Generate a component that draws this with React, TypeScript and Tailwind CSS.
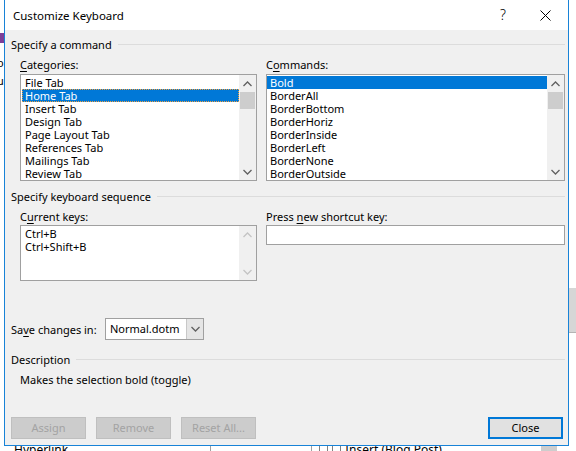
import React from "react";

const CATEGORIES = [
  "File Tab",
  "Home Tab",
  "Insert Tab",
  "Design Tab",
  "Page Layout Tab",
  "References Tab",
  "Mailings Tab",
  "Review Tab",
];

const COMMANDS = [
  "Bold",
  "BorderAll",
  "BorderBottom",
  "BorderHoriz",
  "BorderInside",
  "BorderLeft",
  "BorderNone",
  "BorderOutside",
];

function Chevron({ up, color }: { up?: boolean; color: string }) {
  return (
    <svg width="9" height="6" viewBox="0 0 9 6">
      <path
        d={up ? "M0.5 5 L4.5 1 L8.5 5" : "M0.5 1 L4.5 5 L8.5 1"}
        fill="none"
        stroke={color}
        strokeWidth="1.3"
      />
    </svg>
  );
}

function ScrollBar({ disabled }: { disabled?: boolean }) {
  const c = disabled ? "#c4c4c4" : "#606060";
  return (
    <div className="flex w-[17px] shrink-0 flex-col bg-[#f0f0f0]">
      <div className="flex h-[17px] items-center justify-center">
        <Chevron up color={c} />
      </div>
      {!disabled && <div className="mx-px h-[17px] bg-[#cdcdcd]" />}
      <div className="flex-1" />
      <div className="flex h-[17px] items-center justify-center">
        <Chevron color={c} />
      </div>
    </div>
  );
}

function GroupHeader({ children }: { children: React.ReactNode }) {
  return (
    <div className="flex h-[13px] items-center gap-[6px]">
      <span className="leading-[13px]">{children}</span>
      <div className="h-px flex-1 bg-[#dcdcdc]" />
    </div>
  );
}

function Key({ children }: { children: React.ReactNode }) {
  return <span className="underline underline-offset-[2px]">{children}</span>;
}

function Button({
  label,
  primary,
  disabled,
}: {
  label: string;
  primary?: boolean;
  disabled?: boolean;
}) {
  return (
    <div
      className={
        primary
          ? "flex h-[22px] w-[75px] items-center justify-center border-2 border-[#0078d7] bg-[#e1e1e1] text-black"
          : "flex h-[22px] w-[75px] items-center justify-center border border-[#bfbfbf] bg-[#cccccc] text-[#a3a3a3]"
      }
    >
      {label}
    </div>
  );
}

export default function App() {
  return (
    <div className="relative h-[451px] w-[576px] overflow-hidden bg-white font-['Noto_Sans',sans-serif] text-[11px] text-black">
      {/* window behind the dialog */}
      <div className="absolute left-0 top-[33px] h-[10px] w-[4px] bg-[#7e3f98]" />
      <div className="absolute left-[-3px] top-[56px] leading-[13px]">o</div>
      <div className="absolute left-[-3px] top-[74px] leading-[13px]">u</div>
      <div className="absolute right-0 top-[288px] h-[44px] w-[7px] bg-[#d6d6d6]" />
      <div className="absolute right-0 top-[332px] h-px w-[7px] bg-[#b4b4b4]" />
      <div className="absolute left-[14px] top-[443px] text-[12px] leading-[13px]">Hyperlink...</div>
      <div className="absolute left-[210px] top-[440px] h-[12px] w-px bg-[#a0a0a0]" />
      <div className="absolute left-[311px] top-[440px] h-[12px] w-px bg-[#a0a0a0]" />
      <div className="absolute left-[319px] top-[444px] h-[9px] w-[9px] border border-[#808080] bg-white" />
      <div className="absolute left-[332px] top-[444px] h-[9px] w-[9px] border border-[#808080] bg-white" />
      <div className="absolute left-[345px] top-[443px] text-[12px] leading-[13px]">Insert (Blog Post)</div>
      <div className="absolute left-[541px] top-[444px] h-[8px] w-[16px] bg-[#cdcdcd]" />

      {/* dialog */}
      <div className="absolute left-[4px] top-0 flex h-[446px] w-[565px] flex-col border border-t-0 border-[#1883d7]">
        <div className="flex h-[30px] shrink-0 items-center bg-white pl-[8px]">
          <span className="text-[11.5px] leading-[13px]">Customize Keyboard</span>
          <span className="ml-auto mr-[34px] text-[14px] font-light leading-[14px]">?</span>
          <svg width="11" height="11" viewBox="0 0 11 11" className="mr-[17px]">
            <path d="M0.5 0.5 L10.5 10.5 M10.5 0.5 L0.5 10.5" stroke="#000" strokeWidth="1" />
          </svg>
        </div>

        <div className="flex flex-1 flex-col bg-[#f0f0f0] pl-[6px] pr-[3px] pt-[8px]">
          <GroupHeader>Specify a command</GroupHeader>

          <div className="mt-[7px] flex">
            <div className="ml-[9px] flex w-[237px] flex-col">
              <span className="leading-[13px]">
                <Key>C</Key>ategories:
              </span>
              <div className="mt-[3px] flex h-[107px] border border-[#a0a0a0] bg-white">
                <div className="flex-1 pt-px">
                  {CATEGORIES.map((c) =>
                    c === "Home Tab" ? (
                      <div
                        key={c}
                        className="ml-px h-[13px] bg-[#0078d7] pl-[3px] leading-[13px] text-white outline-1 -outline-offset-1 outline-dotted outline-[#f0a040]"
                      >
                        {c}
                      </div>
                    ) : (
                      <div key={c} className="ml-px h-[13px] pl-[3px] leading-[13px]">
                        {c}
                      </div>
                    ),
                  )}
                </div>
                <ScrollBar />
              </div>
            </div>

            <div className="ml-[9px] flex w-[299px] flex-col">
              <span className="leading-[13px]">
                C<Key>o</Key>mmands:
              </span>
              <div className="mt-[3px] flex h-[107px] border border-[#a0a0a0] bg-white">
                <div className="flex-1 pt-px">
                  {COMMANDS.map((c, i) => (
                    <div
                      key={c}
                      className={
                        i === 0
                          ? "h-[13px] bg-[#0078d7] pl-[3px] leading-[13px] text-white"
                          : "h-[13px] pl-[3px] leading-[13px]"
                      }
                    >
                      {c}
                    </div>
                  ))}
                </div>
                <ScrollBar />
              </div>
            </div>
          </div>

          <div className="mt-[9px]">
            <GroupHeader>Specify keyboard sequence</GroupHeader>
          </div>

          <div className="mt-[7px] flex items-start">
            <div className="ml-[9px] flex w-[237px] flex-col">
              <span className="leading-[13px]">
                C<Key>u</Key>rrent keys:
              </span>
              <div className="mt-[2px] flex h-[56px] border border-[#a0a0a0] bg-white">
                <div className="flex-1 pt-px">
                  <div className="h-[13px] pl-[4px] leading-[13px]">Ctrl+B</div>
                  <div className="h-[13px] pl-[4px] leading-[13px]">Ctrl+Shift+B</div>
                </div>
                <ScrollBar disabled />
              </div>
            </div>

            <div className="ml-[9px] flex w-[299px] flex-col">
              <span className="leading-[13px]">
                Press <Key>n</Key>ew shortcut key:
              </span>
              <div className="mt-[2px] h-[20px] border border-[#a0a0a0] bg-white" />
            </div>
          </div>

          <div className="mt-[37px] flex items-center">
            <span className="w-[94px] leading-[13px]">
              Sa<Key>v</Key>e changes in:
            </span>
            <div className="flex h-[22px] w-[99px] border border-[#a0a0a0] bg-white">
              <span className="flex-1 pl-[4px] leading-[20px]">Normal.dotm</span>
              <div className="flex w-[17px] items-center justify-center border-l border-[#c8c8c8] bg-[#e5e5e5]">
                <Chevron color="#606060" />
              </div>
            </div>
          </div>

          <div className="mt-[13px]">
            <GroupHeader>Description</GroupHeader>
          </div>
          <div className="ml-[9px] mt-[7px] leading-[13px]">Makes the selection bold (toggle)</div>

          <div className="mr-[2px] mt-[31px] flex gap-[10px]">
            <Button label="Assign" disabled />
            <Button label="Remove" disabled />
            <Button label="Reset All..." disabled />
            <div className="ml-auto">
              <Button label="Close" primary />
            </div>
          </div>
        </div>
      </div>
    </div>
  );
}
